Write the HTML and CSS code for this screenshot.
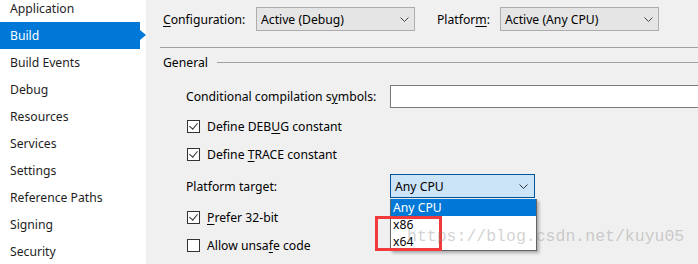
FILE: index.html
```html
<!DOCTYPE html>
<html>
<head>
<meta charset="utf-8">
<link rel="stylesheet" href="styles.css">
</head>
<body>
<div class="app">
  <nav class="side">
    <div class="item">Application</div>
    <div class="item active">Build</div>
    <div class="item">Build Events</div>
    <div class="item">Debug</div>
    <div class="item">Resources</div>
    <div class="item">Services</div>
    <div class="item">Settings</div>
    <div class="item">Reference Paths</div>
    <div class="item">Signing</div>
    <div class="item">Security</div>
  </nav>
  <main class="main">
    <div class="topbar">
      <span class="lbl cfg-lbl"><u>C</u>onfiguration:</span>
      <div class="select cfg-sel"><span>Active (Debug)</span><svg class="chev" width="9" height="5" viewBox="0 0 9 5"><path d="M0.5 0.5 L4.5 4.5 L8.5 0.5" fill="none" stroke="#444" stroke-width="1"/></svg></div>
      <span class="lbl plat-lbl">Platfor<u>m</u>:</span>
      <div class="select plat-sel"><span>Active (Any CPU)</span><svg class="chev" width="9" height="5" viewBox="0 0 9 5"><path d="M0.5 0.5 L4.5 4.5 L8.5 0.5" fill="none" stroke="#444" stroke-width="1"/></svg></div>
    </div>
    <div class="rule"></div>
    <div class="group-head"><span>General</span><div class="line"></div></div>
    <div class="group">
      <div class="row sym-row">
        <span class="lbl field-lbl">Conditional compilation s<u>y</u>mbols:</span>
        <div class="textbox"></div>
      </div>
      <div class="row chk-row r1"><span class="chk on"></span><span>Define DEB<u>U</u>G constant</span></div>
      <div class="row chk-row r2"><span class="chk on"></span><span>Define <u>T</u>RACE constant</span></div>
      <div class="row plat-row">
        <span class="lbl field-lbl">Platform target:</span>
        <div class="dd-wrap">
          <div class="select open"><span>Any CPU</span><svg class="chev" width="9" height="5" viewBox="0 0 9 5"><path d="M0.5 0.5 L4.5 4.5 L8.5 0.5" fill="none" stroke="#333" stroke-width="1"/></svg></div>
          <div class="dd-list">
            <div class="opt sel">Any CPU</div>
            <div class="opt">x86</div>
            <div class="opt">x64</div>
          </div>
          <div class="redbox"></div>
        </div>
      </div>
      <div class="row chk-row r3"><span class="chk on"></span><span><u>P</u>refer 32-bit</span></div>
      <div class="row chk-row r4"><span class="chk"></span><span>Allow unsa<u>f</u>e code</span></div>
    </div>
    <div class="watermark">https://blog.csdn.net/kuyu05</div>
  </main>
</div>
</body>
</html>
```
FILE: styles.css
```css
html, body { margin: 0; padding: 0; }
body {
  width: 698px; height: 264px; overflow: hidden;
  font-family: "Noto Sans", "Open Sans", sans-serif;
  font-size: 12.2px; color: #000; background: #f0f0f0;
}
u { text-decoration: underline; text-underline-offset: 2px; }
.app { display: flex; height: 264px; }
.side {
  width: 146px; flex: none; background: #fff;
  margin-top: -5px;
}
.item {
  height: 27px; line-height: 27px; padding-left: 10px;
  color: #1e1e1e; position: relative;
}
.item.active { background: #0078d7; color: #fff; width: 130px; }
.item.active::after {
  content: ""; position: absolute; right: -6px; top: 8px;
  border-left: 6px solid #0078d7; border-top: 5px solid transparent; border-bottom: 5px solid transparent;
}
.main { flex: 1; position: relative; padding-left: 14px; min-width: 0; }
.topbar { height: 38px; display: flex; align-items: center; padding-left: 3px; }
.select {
  box-sizing: border-box; height: 24px; background: #e5e5e5; border: 1px solid #adadad;
  display: flex; align-items: center; justify-content: space-between; padding: 0 5px 0 4px;
}
.cfg-lbl { width: 93px; }
.cfg-sel { width: 159px; }
.plat-lbl { margin-left: 22px; width: 63px; }
.plat-sel { width: 159px; }
.chev { margin-top: 1px; }
.rule { margin-top: 9px; height: 1px; background: #a0a0a0; }
.group-head { height: 28px; display: flex; align-items: center; padding-left: 3px; }
.group-head .line { flex: 1; height: 1px; background: #a0a0a0; margin-left: 9px; margin-top: 1px; }
.group { padding-left: 26px; }
.row { display: flex; align-items: center; }
.field-lbl { width: 204px; flex: none; }
.sym-row { margin-top: 9px; height: 23px; }
.textbox { box-sizing: border-box; height: 23px; width: 320px; flex: none; background: #fff; border: 1px solid #7a7a7a; }
.chk-row { padding-left: 1px; }
.r1 { height: 28px; margin-top: 4px; }
.r2 { height: 29px; }
.plat-row { height: 24px; margin-top: 5px; }
.r3 { height: 28px; margin-top: 5px; }
.r4 { height: 29px; }
.chk {
  box-sizing: border-box; width: 13px; height: 13px; border: 1px solid #333; background: #fff;
  margin-right: 7px; position: relative; flex: none;
}
.chk.on::after {
  content: ""; position: absolute; left: 3px; top: 0px; width: 4px; height: 7px;
  border-right: 1.5px solid #333; border-bottom: 1.5px solid #333; transform: rotate(40deg);
}
.dd-wrap { position: relative; }
.select.open { width: 145px; background: #cce4f7; border-color: #005499; padding-right: 6px; }
.dd-list {
  position: absolute; left: 0; top: 25px; width: 147px; box-sizing: border-box;
  background: #fff; border: 1px solid #646464; border-top: none;
  box-shadow: 2px 2px 3px rgba(0,0,0,0.3); z-index: 2;
}
.opt { height: 17px; line-height: 17px; padding-left: 2px; }
.opt.sel { background: #0078d7; color: #fff; }
.redbox {
  position: absolute; left: -15px; top: 42px; width: 67px; height: 35px; box-sizing: border-box;
  border: 3px solid #f03a3c; z-index: 3;
}
.watermark {
  position: absolute; left: 261px; top: 227px; z-index: 4;
  font-family: "Liberation Mono", monospace; font-size: 16.5px; color: rgba(140,140,140,0.4);
  white-space: nowrap;
}
```
